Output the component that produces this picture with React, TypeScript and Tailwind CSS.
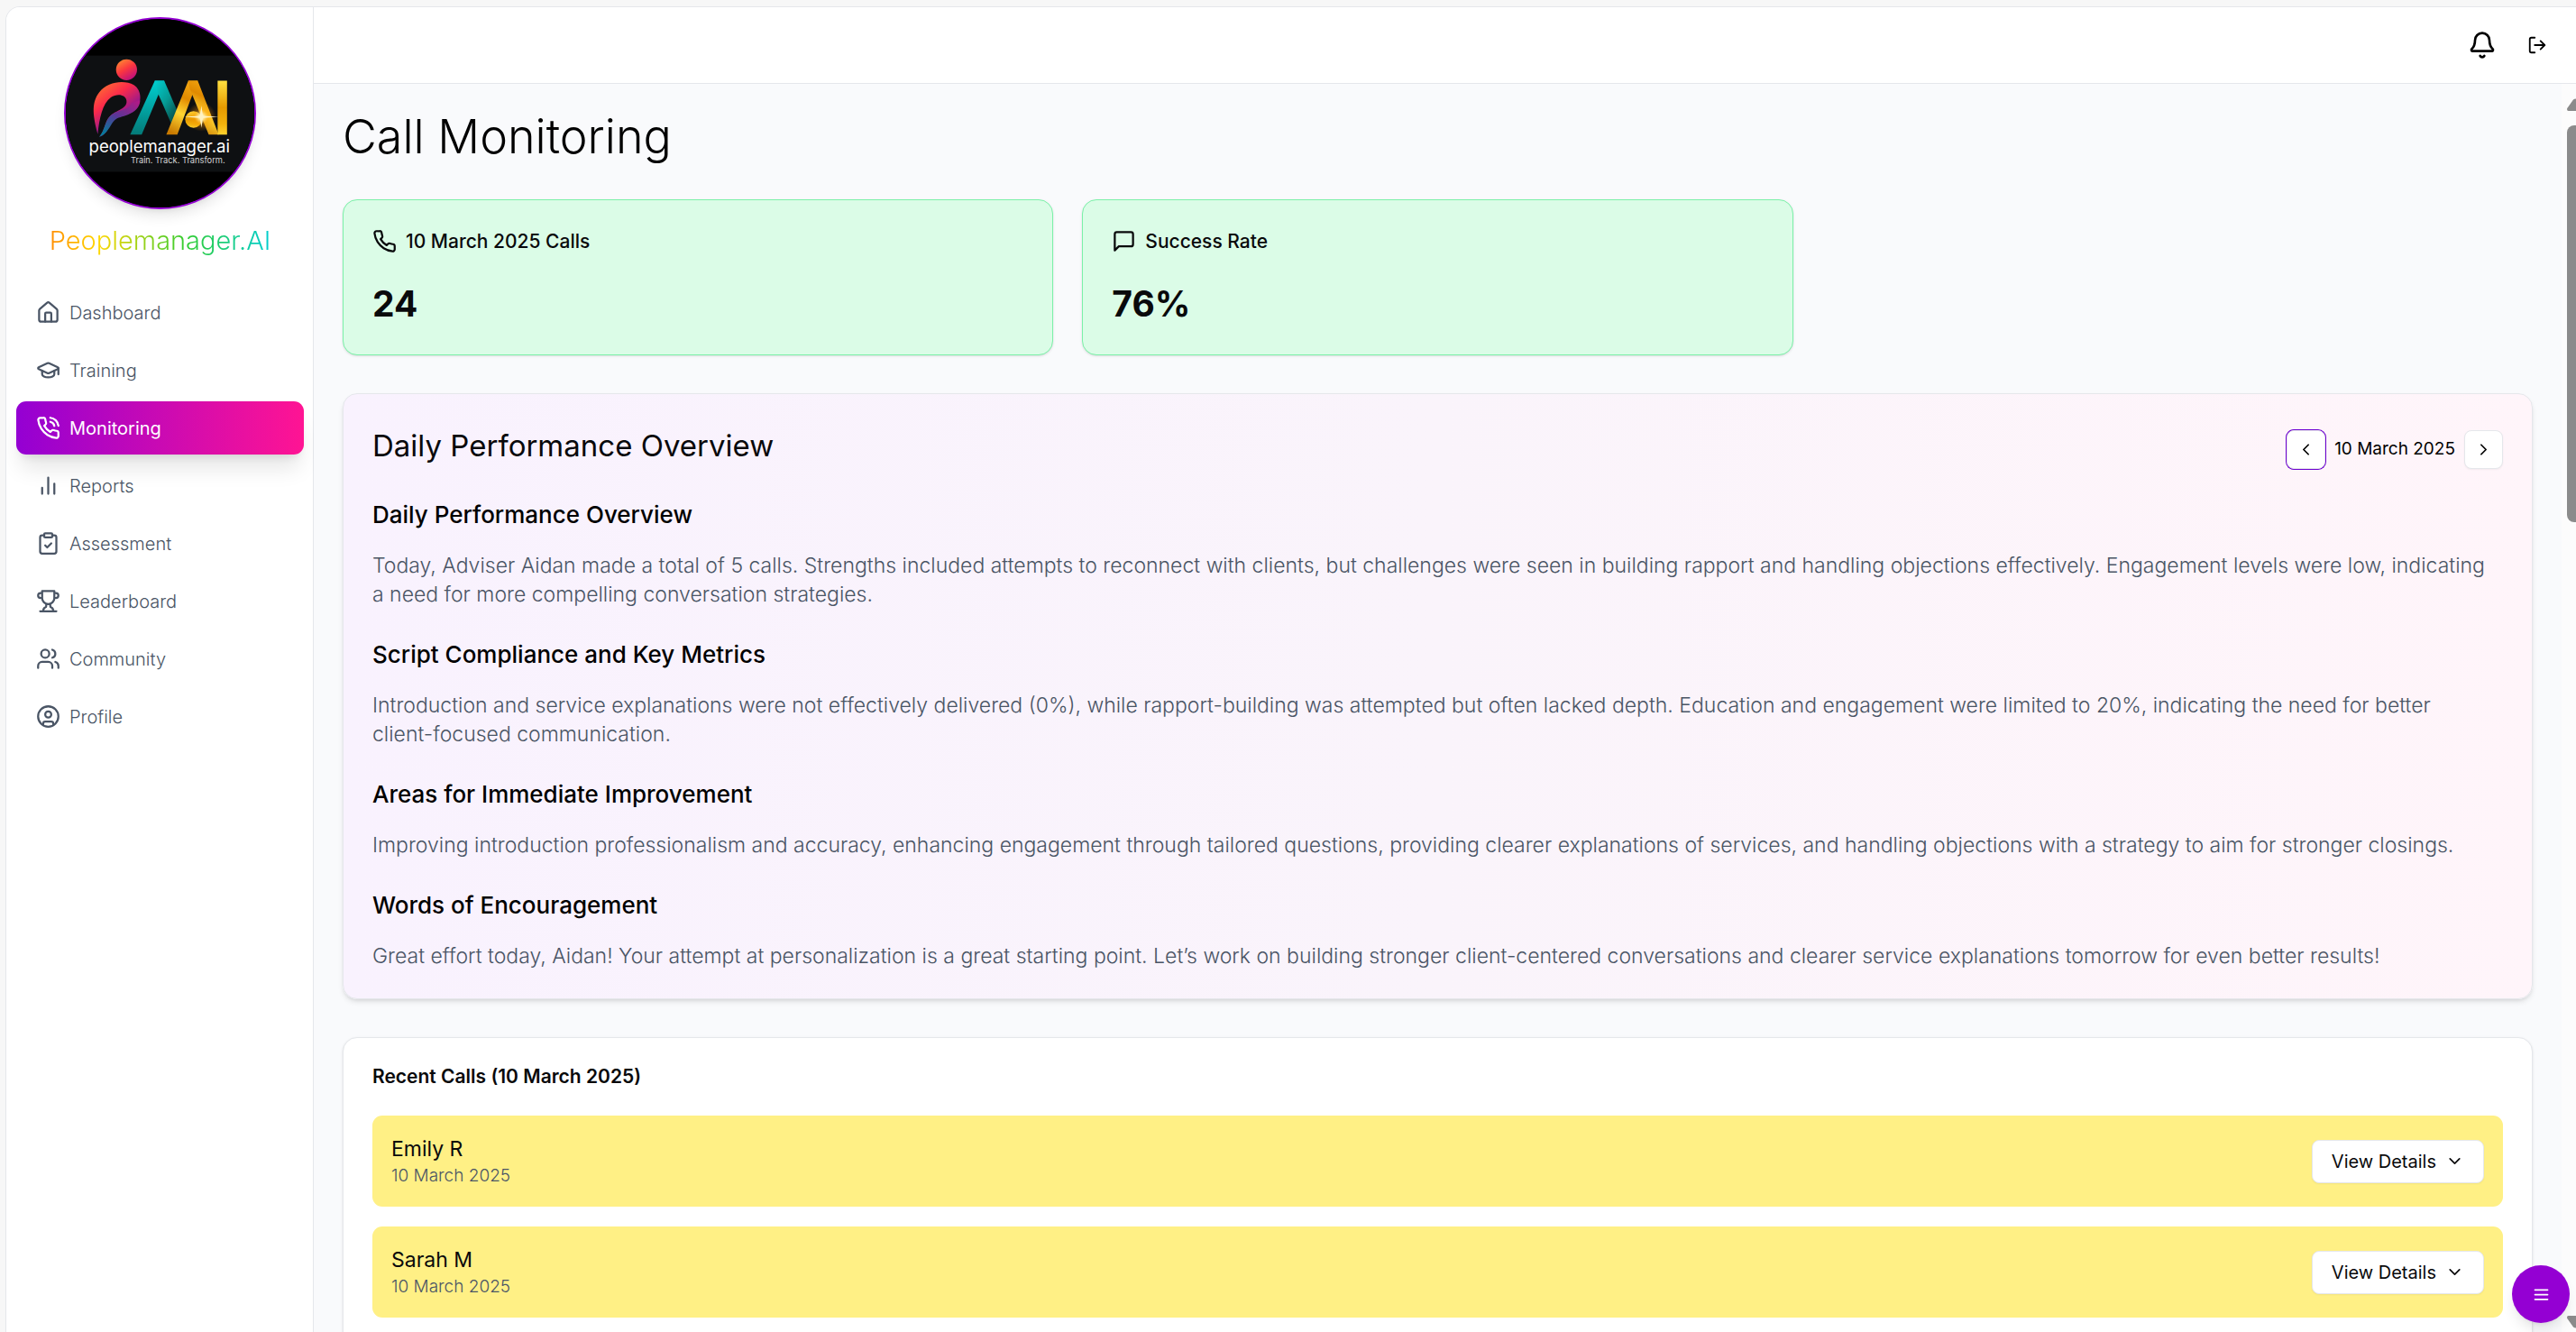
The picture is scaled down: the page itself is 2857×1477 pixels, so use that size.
import type { ReactNode } from "react";
import {
  Bell,
  ChevronDown,
  ChevronLeft,
  ChevronRight,
  CircleUser,
  ClipboardCheck,
  GraduationCap,
  House,
  LogOut,
  Users,
} from "lucide-react";

const ICON = "size-[27px] shrink-0";

const PHONE =
  "M22 16.92v3a2 2 0 0 1-2.18 2 19.79 19.79 0 0 1-8.63-3.07 19.5 19.5 0 0 1-6-6 19.79 19.79 0 0 1-3.07-8.67A2 2 0 0 1 4.11 2h3a2 2 0 0 1 2 1.72 12.84 12.84 0 0 0 .7 2.81 2 2 0 0 1-.45 2.11L8.09 9.91a16 16 0 0 0 6 6l1.27-1.27a2 2 0 0 1 2.11-.45 12.84 12.84 0 0 0 2.81.7A2 2 0 0 1 22 16.92z";

const PATHS = {
  phone: PHONE,
  phoneCall: PHONE + "M14.05 2a9 9 0 0 1 8 7.94M14.05 6A5 5 0 0 1 18 10",
  bars: "M18 20V10M12 20V4M6 20v-6",
  message: "M21 15a2 2 0 0 1-2 2H7l-4 4V5a2 2 0 0 1 2-2h14a2 2 0 0 1 2 2z",
  trophy:
    "M6 9H4.5a2.5 2.5 0 0 1 0-5H6M18 9h1.5a2.5 2.5 0 0 0 0-5H18M4 22h16M10 14.66V17c0 .55-.47.98-.97 1.21C7.85 18.75 7 20.24 7 22M14 14.66V17c0 .55.47.98.97 1.21C16.15 18.75 17 20.24 17 22M18 2H6v7a6 6 0 0 0 12 0V2Z",
  menu: "M4 6h16M4 12h16M4 18h16",
};

function LineIcon({ name, className = ICON }: { name: keyof typeof PATHS; className?: string }) {
  return (
    <svg viewBox="0 0 24 24" fill="none" stroke="currentColor" strokeWidth="2" strokeLinecap="round" strokeLinejoin="round" className={className} aria-hidden="true">
      <path d={PATHS[name]} />
    </svg>
  );
}

function Logo() {
  return (
    <svg viewBox="0 0 360 360" className="size-full" role="img" aria-label="peoplemanager.ai logo">
      <defs>
        <linearGradient id="head" x1="0" y1="0" x2="0.6" y2="1">
          <stop offset="0" stopColor="#ff9a2e" />
          <stop offset="0.55" stopColor="#fb3640" />
          <stop offset="1" stopColor="#c2127a" />
        </linearGradient>
        <linearGradient id="body" x1="0.1" y1="0" x2="0.75" y2="1">
          <stop offset="0" stopColor="#ff7a2e" />
          <stop offset="0.35" stopColor="#fb2b4a" />
          <stop offset="0.62" stopColor="#a31a86" />
          <stop offset="1" stopColor="#0c7fa0" />
        </linearGradient>
        <linearGradient id="tail" x1="0.9" y1="0" x2="0.2" y2="1">
          <stop offset="0" stopColor="#b01a86" />
          <stop offset="0.5" stopColor="#5b3596" />
          <stop offset="1" stopColor="#007f9c" />
        </linearGradient>
        <linearGradient id="teal" x1="0" y1="0" x2="0" y2="1">
          <stop offset="0" stopColor="#00cfd0" />
          <stop offset="1" stopColor="#047a78" />
        </linearGradient>
        <linearGradient id="tealDark" x1="0" y1="0" x2="0.8" y2="1">
          <stop offset="0" stopColor="#00cfd0" />
          <stop offset="0.5" stopColor="#069a94" />
          <stop offset="1" stopColor="#053f3c" />
        </linearGradient>
        <linearGradient id="gold" x1="0.6" y1="0" x2="0.3" y2="1">
          <stop offset="0" stopColor="#f3a712" />
          <stop offset="0.3" stopColor="#e08a00" />
          <stop offset="0.6" stopColor="#ffd633" />
          <stop offset="1" stopColor="#c97a00" />
        </linearGradient>
        <linearGradient id="goldBar" x1="0" y1="0" x2="0" y2="1">
          <stop offset="0" stopColor="#ffe040" />
          <stop offset="0.5" stopColor="#e59a00" />
          <stop offset="0.8" stopColor="#f2b20c" />
          <stop offset="1" stopColor="#ffd22e" />
        </linearGradient>
        <radialGradient id="flare">
          <stop offset="0" stopColor="#fff" />
          <stop offset="0.2" stopColor="#ffe9a0" stopOpacity="0.9" />
          <stop offset="0.5" stopColor="#ff9a00" stopOpacity="0.4" />
          <stop offset="1" stopColor="#ff8a00" stopOpacity="0" />
        </radialGradient>
      </defs>
      <rect width="360" height="360" fill="#000" />
      <rect y="70" width="360" height="222" fill="#0e1012" />
      <circle cx="116" cy="97" r="20" fill="url(#head)" />
      <path d="M61 220C50 180 50 158 64 140C80 119 112 116 130 126C146 136 146 162 132 174C118 186 100 184 90 194C82 204 80 220 64 225C76 210 74 196 84 186C96 174 118 172 116 156C114 144 98 142 86 150C70 162 64 190 61 220Z" fill="url(#body)" />
      <path d="M142 156C140 180 114 184 98 190C84 198 84 218 64 225C74 214 74 198 84 186C98 172 120 176 126 160Z" fill="url(#tail)" />
      <path d="M170 118h18L145 221h-22z" fill="url(#teal)" />
      <path d="M170 118h18L216 183L204 206L176 142z" fill="url(#tealDark)" />
      <path d="M234 118h18L213 221h-21z" fill="url(#gold)" />
      <path d="M234 118h18L292 221h-19L237 134z" fill="url(#gold)" />
      <rect x="290" y="118" width="18" height="103" fill="url(#goldBar)" />
      <circle cx="244" cy="192" r="16" fill="url(#goldBar)" />
      <circle cx="259" cy="187" r="28" fill="url(#flare)" />
      <path d="M226 187L256 185L259 166L262 185L292 187L262 189L259 208L256 189Z" fill="#fff3c4" />
      <text x="44" y="255" fill="#fff" fontSize="32" fontFamily="Inter, sans-serif">peoplemanager.ai</text>
      <text x="124" y="275" fill="#d4d4d4" fontSize="16" fontFamily="Inter, sans-serif">Train. Track. Transform.</text>
    </svg>
  );
}

const NAV: { label: string; icon: ReactNode }[] = [
  { label: "Dashboard", icon: <House className={ICON} /> },
  { label: "Training", icon: <GraduationCap className={ICON} /> },
  { label: "Monitoring", icon: <LineIcon name="phoneCall" /> },
  { label: "Reports", icon: <LineIcon name="bars" /> },
  { label: "Assessment", icon: <ClipboardCheck className={ICON} /> },
  { label: "Leaderboard", icon: <LineIcon name="trophy" /> },
  { label: "Community", icon: <Users className={ICON} /> },
  { label: "Profile", icon: <CircleUser className={ICON} /> },
];

const ACTIVE = "bg-linear-to-r/srgb from-[#9400d3] to-[#ff1493] font-normal text-white shadow-xl";
const IDLE = "font-light text-gray-600";

function Sidebar() {
  return (
    <aside className="w-[341px] shrink-0 border-r border-gray-200 bg-white px-[10px] pt-[11px] pl-[11px]">
      <div className="mx-auto size-[213px] overflow-hidden rounded-full border-2 border-[#9400d3] bg-black shadow-lg">
        <Logo />
      </div>
      <p className="mx-auto mt-[17px] w-fit bg-[linear-gradient(to_right,#ff8c00,#ffd700_22%,#32cd32_62%,#00ced1)] bg-clip-text text-[29px] leading-9 font-light text-transparent">
        Peoplemanager.AI
      </p>
      <nav className="mt-8 flex flex-col gap-[5px]">
        {NAV.map((item) => (
          <a
            key={item.label}
            href="#"
            aria-current={item.label === "Monitoring" ? "page" : undefined}
            className={`flex h-[59px] items-center gap-[10px] rounded-[11px] px-[22px] text-[20px] ${item.label === "Monitoring" ? ACTIVE : IDLE}`}
          >
            {item.icon}
            {item.label}
          </a>
        ))}
      </nav>
    </aside>
  );
}

function StatCard({ icon, label, value }: { icon: ReactNode; label: string; value: string }) {
  return (
    <section className="rounded-2xl border border-green-300 bg-green-100 p-8 shadow-sm">
      <h2 className="flex items-center gap-[10px] text-[21px] leading-[27px] font-medium">
        {icon}
        {label}
      </h2>
      <p className="mt-8 text-[39px] leading-[48px] font-bold">{value}</p>
    </section>
  );
}

const OVERVIEW = [
  {
    title: "Daily Performance Overview",
    text: "Today, Adviser Aidan made a total of 5 calls. Strengths included attempts to reconnect with clients, but challenges were seen in building rapport and handling objections effectively. Engagement levels were low, indicating a need for more compelling conversation strategies.",
  },
  {
    title: "Script Compliance and Key Metrics",
    text: "Introduction and service explanations were not effectively delivered (0%), while rapport-building was attempted but often lacked depth. Education and engagement were limited to 20%, indicating the need for better client-focused communication.",
  },
  {
    title: "Areas for Immediate Improvement",
    text: "Improving introduction professionalism and accuracy, enhancing engagement through tailored questions, providing clearer explanations of services, and handling objections with a strategy to aim for stronger closings.",
  },
  {
    title: "Words of Encouragement",
    text: "Great effort today, Aidan! Your attempt at personalization is a great starting point. Let’s work on building stronger client-centered conversations and clearer service explanations tomorrow for even better results!",
  },
];

function Overview() {
  return (
    <section className="rounded-2xl border border-gray-200 bg-linear-to-r/srgb from-[#f9f2fe] via-[#faf4fb] to-[#fff5fa] px-8 pt-8 pb-[31px] shadow-md">
      <header className="flex h-[58px] items-center justify-between">
        <h2 className="pb-2 text-[33px] leading-10 font-normal">Daily Performance Overview</h2>
        <div className="flex items-center gap-[10px] text-[19px] text-black">
          <button aria-label="Previous day" className="flex size-[43px] items-center justify-center rounded-lg border border-gray-200 bg-white ring-1 ring-[#6d00d0]">
            <ChevronLeft className="size-[21px]" />
          </button>
          <span>10 March 2025</span>
          <button aria-label="Next day" className="flex size-[43px] items-center justify-center rounded-lg border border-gray-200 bg-white shadow-xs">
            <ChevronRight className="size-[21px]" />
          </button>
        </div>
      </header>
      <div className="mt-[25px] flex flex-col gap-8">
        {OVERVIEW.map((item) => (
          <div key={item.title} className="flex flex-col gap-[22px]">
            <h3 className="text-[26px] leading-[37px] font-medium text-black">{item.title}</h3>
            <p className="pr-3 text-[23px] leading-8 font-light text-gray-600">{item.text}</p>
          </div>
        ))}
      </div>
    </section>
  );
}

function RecentCalls() {
  return (
    <section className="rounded-2xl border border-gray-200 bg-white p-8 shadow-sm">
      <h2 className="text-[21px] leading-[22px] font-semibold">Recent Calls (10 March 2025)</h2>
      <ul className="mt-8 flex flex-col gap-[22px]">
        {["Emily R", "Sarah M"].map((name) => (
          <li key={name} className="flex items-center justify-between rounded-[11px] bg-yellow-200 p-[21px]">
            <div>
              <p className="text-[23px] leading-8">{name}</p>
              <p className="text-[19px] leading-[27px] font-light text-gray-600">10 March 2025</p>
            </div>
            <button className="flex h-12 items-center gap-[10px] rounded-lg border border-gray-200 bg-white px-[21px] text-[20px] shadow-xs">
              View Details
              <ChevronDown className="size-[21px]" />
            </button>
          </li>
        ))}
      </ul>
    </section>
  );
}

function ScrollTrack() {
  return (
    <div aria-hidden="true" className="flex w-4 shrink-0 flex-col items-end overflow-hidden bg-[#fcfcfc] text-[#8b8b8b]">
      <svg viewBox="0 0 10 14" className="mt-4 h-[14px] w-[10px] shrink-0">
        <path d="M0 12Q0 11 1 10L7 1.500Q8 0.500 10 0.500V14H1.500Q0 14 0 12Z" fill="currentColor" />
      </svg>
      <div className="mt-4 h-[440px] w-[10px] shrink-0 rounded-l-lg bg-[#8b8b8b]" />
      <svg viewBox="0 0 10 14" className="mt-auto mb-1 h-[14px] w-[10px] shrink-0">
        <path d="M0 2Q0 3 1 4L7 12.500Q8 13.500 10 13.500V0H1.500Q0 0 0 2Z" fill="currentColor" />
      </svg>
    </div>
  );
}

export default function App() {
  return (
    <div className="h-screen overflow-hidden bg-[#f7f7f7] pt-[7px] pl-[6px] font-[Inter,sans-serif] text-zinc-950">
      <div className="flex h-full overflow-hidden rounded-tl-2xl border-t border-l border-gray-200 bg-white">
        <Sidebar />
        <div className="flex min-w-0 grow flex-col">
          <header className="flex h-[85px] shrink-0 items-center justify-end gap-[34px] border-b border-gray-200 bg-white pr-8 text-black">
            <button aria-label="Notifications">
              <Bell className="size-8" />
            </button>
            <button aria-label="Log out">
              <LogOut className="size-[22px]" />
            </button>
          </header>
          <div className="flex min-h-0 grow">
            <main className="flex min-w-0 grow flex-col gap-[42px] overflow-hidden bg-[#f9fafc] p-8">
              <h1 className="text-[52px] leading-[54px] font-light text-black">Call Monitoring</h1>
              <div className="grid shrink-0 grid-cols-3 gap-8">
                <StatCard icon={<LineIcon name="phone" />} label="10 March 2025 Calls" value="24" />
                <StatCard icon={<LineIcon name="message" />} label="Success Rate" value="76%" />
              </div>
              <Overview />
              <RecentCalls />
            </main>
            <ScrollTrack />
          </div>
        </div>
      </div>
      <button aria-label="Open menu" className="fixed right-[7px] bottom-[10px] flex size-16 items-center justify-center rounded-full bg-[#9400d3] text-white shadow-lg">
        <LineIcon name="menu" className="size-[21px]" />
      </button>
    </div>
  );
}
